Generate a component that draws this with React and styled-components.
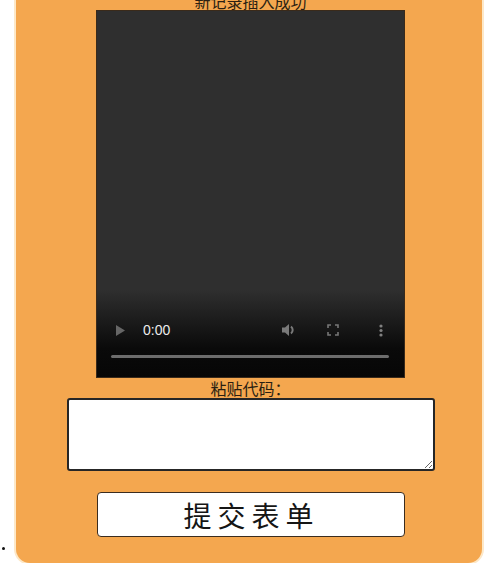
import React from "react";
import styled, { createGlobalStyle } from "styled-components";

const Global = createGlobalStyle`
  html, body { margin: 0; padding: 0; background: #ffffff; overflow: hidden; }
  body { font-family: "Noto Sans CJK SC", "Noto Sans", sans-serif; }
`;

const Page = styled.div`
  display: flex;
  align-items: flex-end;
  margin-top: -20px;
  width: 499px;
`;

const BulletCol = styled.div`
  width: 16px;
  display: flex;
  padding-bottom: 13px;
  padding-left: 2px;
  box-sizing: border-box;
`;

const Bullet = styled.span`
  width: 3px;
  height: 3px;
  border-radius: 50%;
  background: #111;
`;

const Panel = styled.div`
  width: 466px;
  box-sizing: border-box;
  background: #f4a74f;
  border-radius: 14px;
  box-shadow: 0 0 0 2px #fde8c8;
  padding: 12px 0 26px 3px;
  display: flex;
  flex-direction: column;
  align-items: center;
`;

const Title = styled.div`
  font-size: 16px;
  line-height: 18px;
  color: #2b1f12;
`;

const Video = styled.div`
  width: 309px;
  height: 368px;
  background: linear-gradient(to bottom, #2f2f2f 0%, #2f2f2f 76%, #0a0a0a 92%, #060606 100%);
  display: flex;
  flex-direction: column;
  justify-content: flex-end;
  box-shadow: inset 0 0 0 1px #3a2a1a;
`;

const Controls = styled.div`
  display: flex;
  align-items: center;
  height: 24px;
  padding: 0 22px 0 20px;
`;

const Time = styled.span`
  font-family: "Liberation Sans", Arial, sans-serif;
  font-size: 14px;
  color: #ececec;
  margin-left: 18px;
  flex: 1;
`;

const CtrlIcon = styled.span`
  display: flex;
  align-items: center;
  margin-left: ${(p) => p.$gap}px;
`;

const Progress = styled.div`
  margin: 13px 16px 20px 15px;
  height: 3px;
  border-radius: 2px;
  background: #6c6c6c;
`;

const Label = styled.div`
  font-size: 16px;
  line-height: 20px;
  color: #2b1f12;
`;

const CodeArea = styled.textarea`
  width: 368px;
  height: 73px;
  box-sizing: border-box;
  border: 2px solid #262626;
  border-radius: 3px;
  background: #fff;
  outline: none;
`;

const SubmitButton = styled.button`
  margin-top: 21px;
  width: 308px;
  height: 45px;
  box-sizing: border-box;
  background: #fff;
  border: 1.5px solid #3a2c1f;
  border-radius: 4px;
  font-family: "Noto Sans CJK SC", sans-serif;
  font-size: 28px;
  letter-spacing: 6px;
  padding-left: 8px;
  color: #151515;
  line-height: 1;
`;

const Play = () => (
  <svg width="9" height="11" viewBox="0 0 9 11">
    <path d="M0 0 L9 5.5 L0 11 Z" fill="#666" />
  </svg>
);

const Volume = () => (
  <svg width="15" height="14" viewBox="0 0 15 14">
    <path d="M0 4.5 H3 L7 1 V13 L3 9.5 H0 Z" fill="#7a7a7a" />
    <path d="M9 3.5 A4.5 4.5 0 0 1 9 10.5" stroke="#7a7a7a" strokeWidth="2" fill="none" />
  </svg>
);

const Fullscreen = () => (
  <svg width="12" height="12" viewBox="0 0 12 12" fill="none" stroke="#777" strokeWidth="1.6">
    <path d="M1 4 V1 H4" />
    <path d="M8 1 H11 V4" />
    <path d="M11 8 V11 H8" />
    <path d="M4 11 H1 V8" />
  </svg>
);

const Kebab = () => (
  <svg width="4" height="13" viewBox="0 0 4 13" fill="#808080">
    <circle cx="2" cy="2" r="1.6" />
    <circle cx="2" cy="6.5" r="1.6" />
    <circle cx="2" cy="11" r="1.6" />
  </svg>
);

export default function App() {
  return (
    <>
      <Global />
      <Page>
        <BulletCol>
          <Bullet />
        </BulletCol>
        <Panel>
          <Title>新记录插入成功</Title>
          <Video>
            <Controls>
              <Play />
              <Time>0:00</Time>
              <CtrlIcon $gap={0}>
                <Volume />
              </CtrlIcon>
              <CtrlIcon $gap={30}>
                <Fullscreen />
              </CtrlIcon>
              <CtrlIcon $gap={40}>
                <Kebab />
              </CtrlIcon>
            </Controls>
            <Progress />
          </Video>
          <Label>粘贴代码：</Label>
          <CodeArea />
          <SubmitButton>提交表单</SubmitButton>
        </Panel>
      </Page>
    </>
  );
}
